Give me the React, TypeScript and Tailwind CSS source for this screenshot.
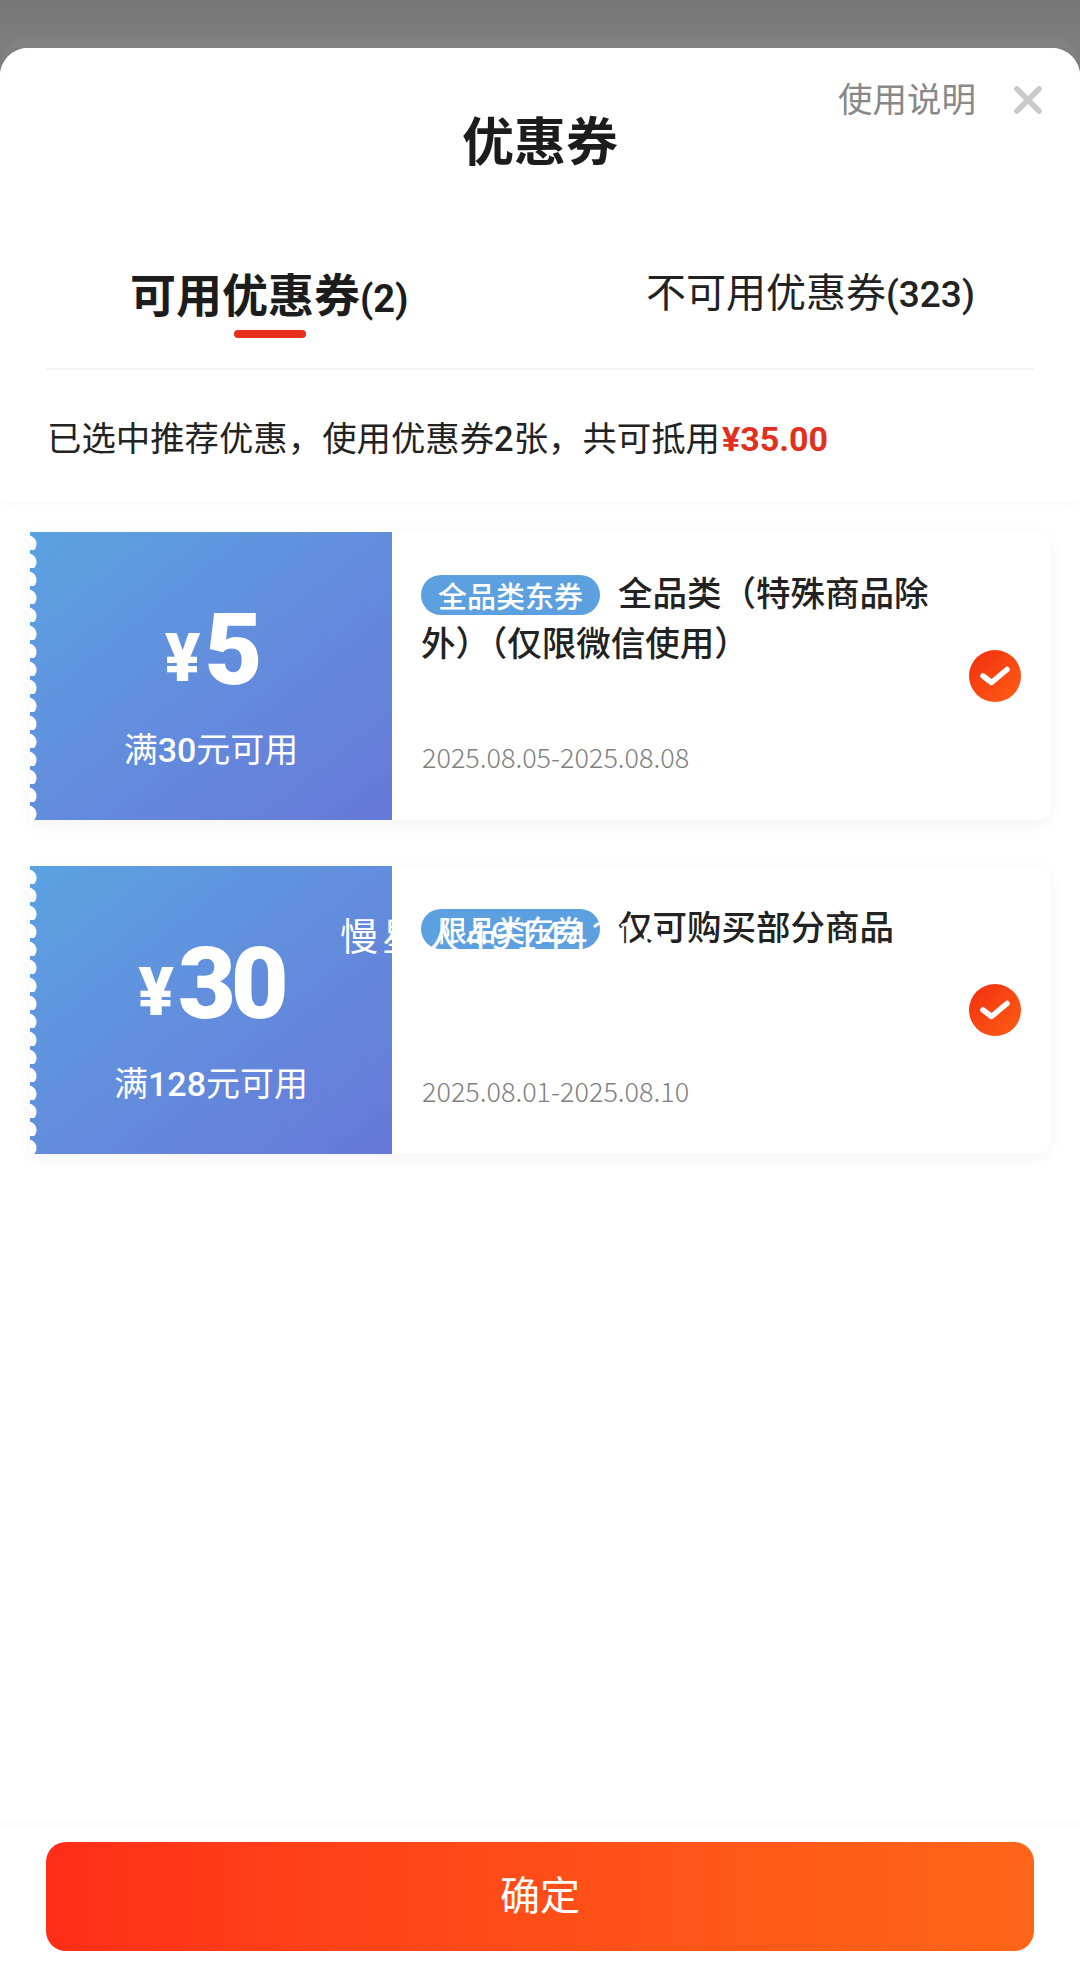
const CJK = "font-['Roboto','Noto_Sans_CJK_SC','Noto_Sans',sans-serif]";
const NOTO = "font-['Noto_Sans_CJK_SC','Noto_Sans',sans-serif]";

function Check() {
  return (
    <div className="flex h-[52px] w-[52px] shrink-0 items-center justify-center rounded-full bg-gradient-to-br from-[#f22c10] to-[#ff5c14]">
      <svg width="32" height="24" viewBox="0 0 32 24" fill="none">
        <path d="M4 12 L12.5 18.5 L28 5.5" stroke="#fff" strokeWidth="5.5" strokeLinecap="round" strokeLinejoin="round" />
      </svg>
    </div>
  );
}

function Coupon({
  amount,
  minSpend,
  chip,
  title,
  date,
}: {
  amount: string;
  minSpend: string;
  chip: string;
  title: string;
  date: string;
}) {
  return (
    <div className="mx-[30px] flex h-[288px] rounded-r-[12px] bg-white shadow-[0_4px_16px_rgba(0,0,0,0.05)]">
      <div className="relative flex w-[362px] shrink-0 flex-col items-center bg-gradient-to-br from-[#5ba2e1] to-[#6778d8] text-white">
        <div className="absolute inset-y-0 left-0 w-[8px] bg-[radial-gradient(circle_at_-2px_12px,#fff_8px,transparent_9px)] bg-[length:8px_18px]" />
        <div className="mt-[72px] flex h-[92px] items-end font-black leading-none">
          <span className="mb-[4px] mr-[4px] text-[66px] leading-none">¥</span>
          <span className="text-[100px] leading-[92px] tracking-[-5px]">{amount}</span>
        </div>
        <div className="mt-[29px] text-[34px] leading-[50px]">
          满<span className="font-medium">{minSpend}</span>元可用
        </div>
      </div>
      <div className="flex min-w-0 flex-1 items-center pl-[29px] pr-[29px]">
        <div className="flex h-full min-w-0 flex-1 flex-col pt-[34px]">
          <div className={`w-[520px] text-[34.5px] font-medium leading-[50px] text-[#222] ${NOTO}`}>
            <span className="mr-[18px] inline-block h-[40px] rounded-full bg-[#5ca0e0] px-[17px] align-[-2px] text-[29px] font-medium leading-[40px] text-white">
              {chip}
            </span>
            {title}
          </div>
          <div className={`mt-auto mb-[44px] pl-[1px] text-[27px] font-light leading-[38px] text-[#808080] ${NOTO}`}>{date}</div>
        </div>
        <Check />
      </div>
    </div>
  );
}

export default function App() {
  return (
    <div className={`relative flex h-[1968px] w-[1080px] flex-col overflow-hidden bg-[#7d7c7d] ${CJK}`}>
      <div className="h-[48px] shrink-0 bg-gradient-to-b from-[#787778] to-[#7f7e7f]" />
      <div className="flex min-h-0 flex-1 flex-col rounded-t-[28px] bg-white shadow-[0_-12px_0_0_rgba(255,255,255,0.03)]">
        <div className="z-10 rounded-t-[28px] bg-white shadow-[0_4px_12px_rgba(0,0,0,0.025)]">
          <div className="relative h-[128px]">
            <h1 className="pt-[62px] text-center text-[52px] font-bold leading-[68px] text-[#1c1c1c]">优惠券</h1>
            <div className="absolute right-[38px] top-[29px] flex items-center gap-[38px]">
              <span className="text-[34.5px] leading-[46px] text-[#888]">使用说明</span>
              <svg width="28" height="28" viewBox="0 0 28 28" fill="none">
                <path d="M3 3 L25 25 M25 3 L3 25" stroke="#c9c9c9" strokeWidth="5.5" strokeLinecap="round" />
              </svg>
            </div>
          </div>
          <div className="mx-[46px] flex h-[194px] border-b-2 border-[#f4f4f4]">
            <div className="relative w-[494px] pl-[84px] pt-[90px] font-bold">
              <div className="whitespace-nowrap text-[46px] leading-[60px] text-[#1c1c1c]">
                可用优惠券<span className="text-[38px]">(2)</span>
              </div>
              <div className="absolute bottom-[30px] left-[188px] h-[8px] w-[72px] rounded-full bg-[#e62e1a]" />
            </div>
            <div className="whitespace-nowrap pl-[106px] pt-[90px] text-[40px] leading-[56px] text-[#222]">
              不可用优惠券<span className="text-[37px] font-medium">(323)</span>
            </div>
          </div>
          <div className="flex h-[132px] items-center pl-[47px] pt-[5px] text-[34.4px] leading-[46px] text-[#222]">
            已选中推荐优惠，使用优惠券<span className="font-medium">2</span>张，共可抵用
            <span className="ml-[2px] text-[34px] font-bold text-[#e0301e]">¥35.00</span>
          </div>
        </div>
        <div className="flex flex-1 flex-col gap-[46px] pt-[30px]">
          <Coupon amount="5" minSpend="30" chip="全品类东券" title="全品类（特殊商品除外）（仅限微信使用）" date="2025.08.05-2025.08.08" />
          <Coupon amount="30" minSpend="128" chip="限品类东券" title="仅可购买部分商品" date="2025.08.01-2025.08.10" />
        </div>
        <div className="h-[145px] shrink-0 border-t-2 border-[#fafafa] px-[46px] pt-[17px]">
          <button className="flex h-[109px] w-full items-center justify-center rounded-[20px] bg-gradient-to-r from-[#ff2d18] to-[#ff6518] pt-[1px] text-[40px] text-white">
            确定
          </button>
        </div>
      </div>
      <div className={`absolute left-[340px] top-[906px] z-20 whitespace-nowrap text-[38px] leading-[56px] tracking-[4px] text-white ${NOTO}`}>
        慢星人49144216
      </div>
    </div>
  );
}
